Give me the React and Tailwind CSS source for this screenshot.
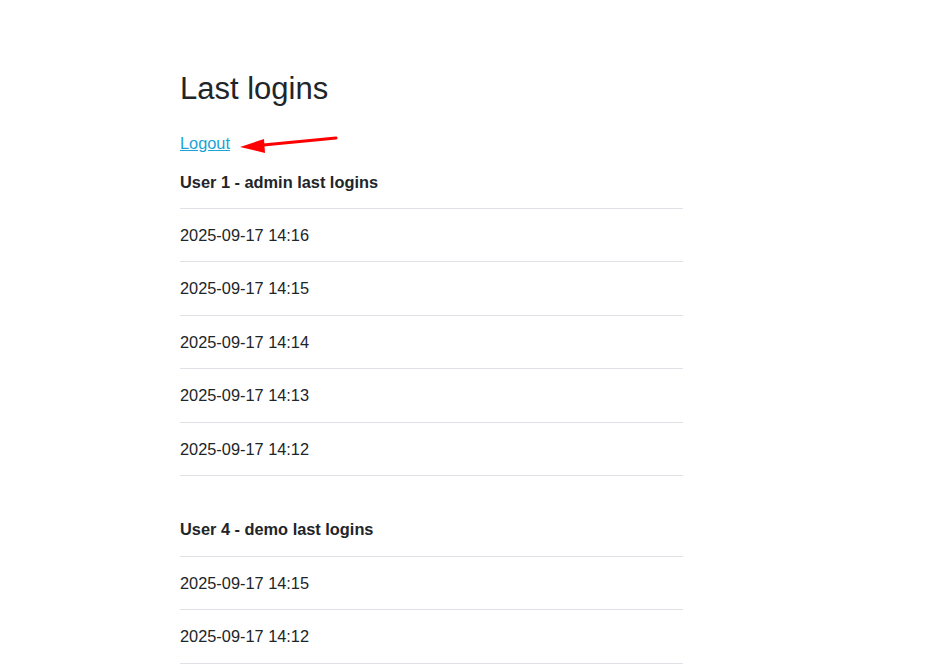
import React from 'react';

const sections = [
  {
    title: 'User 1 - admin last logins',
    rows: ['2025-09-17 14:16', '2025-09-17 14:15', '2025-09-17 14:14', '2025-09-17 14:13', '2025-09-17 14:12'],
  },
  {
    title: 'User 4 - demo last logins',
    rows: ['2025-09-17 14:15', '2025-09-17 14:12'],
  },
];

function LoginTable({ title, rows, className = '' }) {
  return (
    <table className={`w-full border-collapse ${className}`}>
      <thead>
        <tr className="border-b border-[#dee2e6]">
          <th className="text-left font-bold py-[14px] leading-[24.4px]">{title}</th>
        </tr>
      </thead>
      <tbody>
        {rows.map((r, i) => (
          <tr key={i} className="border-b border-[#dee2e6]">
            <td className="py-[14px] leading-[24.4px]">{r}</td>
          </tr>
        ))}
      </tbody>
    </table>
  );
}

export default function App() {
  return (
    <div
      className="min-h-screen bg-white text-[#212529] text-[16.35px]"
      style={{ fontFamily: '"Liberation Sans", Arial, sans-serif' }}
    >
      <div className="w-[503px] ml-[180px] pt-[70px] pb-10">
        <h1 className="text-[31px] leading-[37px] font-normal mb-[24px]">Last logins</h1>
        <div className="relative leading-[24.5px]">
          <a href="#" className="text-[#1aa3d4] underline">Logout</a>
          {/* annotation arrow */}
          <svg className="absolute left-[58px] top-[2px]" width="100" height="22" viewBox="0 0 100 22">
            <line x1="98" y1="5" x2="20" y2="12.5" stroke="#ff0000" strokeWidth="3" strokeLinecap="round" />
            <polygon points="2,14 26,6 27,20" fill="#ff0000" />
          </svg>
        </div>
        <LoginTable {...sections[0]} />
        <LoginTable {...sections[1]} className="mt-[27.5px]" />
      </div>
    </div>
  );
}
